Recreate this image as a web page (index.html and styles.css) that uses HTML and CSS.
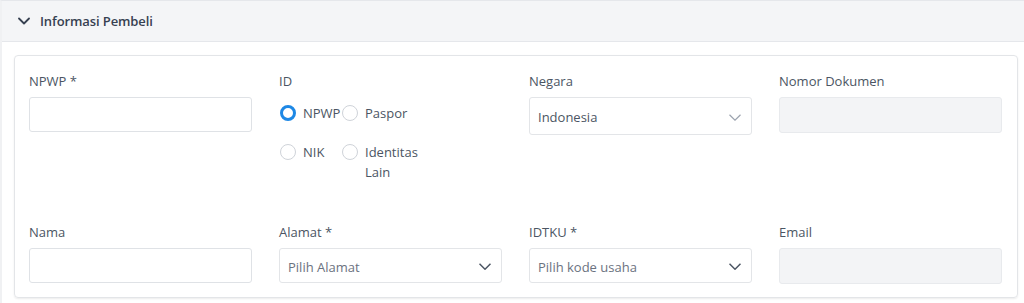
FILE: index.html
```html
<!DOCTYPE html>
<html lang="en">
<head>
    <meta charset="UTF-8">
    <meta name="viewport" content="width=device-width, initial-scale=1.0">
    <title>Informasi Pembeli</title>
    <link rel="stylesheet" href="styles.css">
</head>
<body>
    <div class="section">
        <div class="section-header">
            <svg class="chevron" width="12" height="8" viewBox="0 0 12 8">
                <path d="M1 1.5l5 5 5-5" fill="none" stroke="#374151" stroke-width="1.8" stroke-linecap="round" stroke-linejoin="round"/>
            </svg>
            <span>Informasi Pembeli</span>
        </div>

        <div class="section-body">
            <div class="card">
                <div class="field">
                    <label>NPWP *</label>
                    <input type="text" class="input">
                </div>

                <div class="field">
                    <label>ID</label>
                    <div class="radio-group">
                        <div class="radio-option">
                            <span class="radio checked"></span>
                            <span class="radio-label">NPWP</span>
                        </div>
                        <div class="radio-option">
                            <span class="radio"></span>
                            <span class="radio-label">Paspor</span>
                        </div>
                        <div class="radio-option">
                            <span class="radio"></span>
                            <span class="radio-label">NIK</span>
                        </div>
                        <div class="radio-option">
                            <span class="radio"></span>
                            <span class="radio-label">Identitas Lain</span>
                        </div>
                    </div>
                </div>

                <div class="field">
                    <label>Negara</label>
                    <div class="select tall">
                        <span class="value">Indonesia</span>
                        <svg width="12" height="7" viewBox="0 0 12 7">
                            <path d="M0.5 0.8l5.5 5.4 5.5-5.4" fill="none" stroke="#9ca3af" stroke-width="1.2"/>
                        </svg>
                    </div>
                </div>

                <div class="field">
                    <label>Nomor Dokumen</label>
                    <div class="input disabled"></div>
                </div>

                <div class="field">
                    <label>Nama</label>
                    <input type="text" class="input">
                </div>

                <div class="field">
                    <label>Alamat *</label>
                    <div class="select">
                        <span class="placeholder">Pilih Alamat</span>
                        <svg width="12" height="7" viewBox="0 0 12 7">
                            <path d="M0.5 0.8l5.5 5.4 5.5-5.4" fill="none" stroke="#4b5563" stroke-width="1.5"/>
                        </svg>
                    </div>
                </div>

                <div class="field">
                    <label>IDTKU *</label>
                    <div class="select">
                        <span class="placeholder">Pilih kode usaha</span>
                        <svg width="12" height="7" viewBox="0 0 12 7">
                            <path d="M0.5 0.8l5.5 5.4 5.5-5.4" fill="none" stroke="#4b5563" stroke-width="1.5"/>
                        </svg>
                    </div>
                </div>

                <div class="field">
                    <label>Email</label>
                    <div class="input disabled"></div>
                </div>
            </div>
        </div>
    </div>
</body>
</html>
```
FILE: styles.css
```css
body {
    margin: 0;
    font-family: "Open Sans", "Noto Sans", sans-serif;
    font-size: 13px;
    color: #4b5563;
    background-color: #ffffff;
}

.section {
    border-top: 1px solid #e5e7eb;
    border-left: 2px solid #f0f1f3;
}

.section-header {
    display: flex;
    align-items: center;
    gap: 10px;
    height: 40px;
    padding-left: 16px;
    background-color: #f4f5f7;
    border-bottom: 1px solid #e5e7eb;
    font-weight: 600;
    font-size: 13px;
    color: #374151;
}

.section-header span {
    letter-spacing: -0.1px;
}

.section-body {
    padding: 13px 6px 6px 12px;
}

.card {
    display: grid;
    grid-template-columns: repeat(4, 223px);
    align-items: start;
    column-gap: 27px;
    row-gap: 40px;
    padding: 15px 14px 13px 14px;
    border: 1px solid #e3e5e8;
    border-radius: 4px;
    box-shadow: 0 1px 2px rgba(0, 0, 0, 0.08);
}

.field label {
    display: block;
    height: 20px;
    line-height: 20px;
    margin-bottom: 6px;
    color: #4b5563;
}

.input {
    display: block;
    box-sizing: border-box;
    width: 100%;
    height: 35px;
    margin: 0;
    border: 1px solid #dfe2e6;
    border-radius: 3px;
    background-color: #ffffff;
    font: inherit;
}

.input.disabled {
    height: 36px;
    background-color: #f3f4f6;
    border-color: #e8eaed;
}

.select {
    display: flex;
    align-items: center;
    justify-content: space-between;
    box-sizing: border-box;
    height: 35px;
    padding: 2px 10px 0 8px;
    border: 1px solid #e3e5e8;
    border-radius: 3px;
}

.select.tall {
    height: 38px;
}

.select .value {
    color: #4b5563;
}

.select .placeholder {
    color: #6b7280;
}

.radio-group {
    display: grid;
    grid-template-columns: 62px 62px;
    row-gap: 19px;
    margin-top: 12px;
    padding-left: 1px;
}

.radio-option {
    display: flex;
    align-items: flex-start;
    line-height: 20px;
}

.radio {
    flex: none;
    box-sizing: border-box;
    width: 16px;
    height: 16px;
    margin-top: 2px;
    margin-right: 7px;
    border: 1px solid #cfd3d9;
    border-radius: 50%;
}

.radio.checked {
    border: 3.5px solid #1e88e5;
}

.radio-label {
    width: 39px;
    color: #4b5563;
}
```
